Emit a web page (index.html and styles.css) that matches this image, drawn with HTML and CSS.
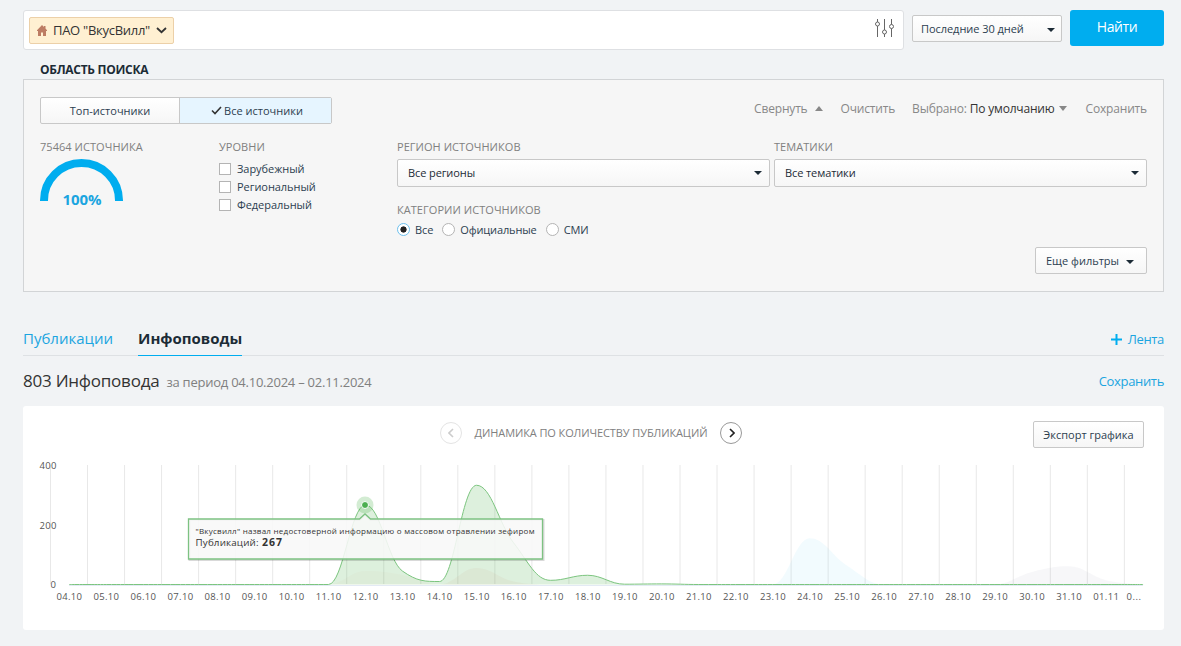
FILE: index.html
```
<!DOCTYPE html>
<html lang="ru">
<head>
	<meta charset="UTF-8">
	<title>Инфоповоды</title>
	<link rel="stylesheet" href="styles.css">
</head>
<body>
	<div class="page">
		<!-- строка поиска -->
		<div class="search">
			<div class="search-field">
				<div class="tag">
					<svg class="home" width="10" height="11" viewBox="0 0 10 11"><path d="M5 0l2 2V1h1.500v2.500L10 5.300V6H9v5H6V7.500H4V11H1V6H0v-.7z"/></svg>
					<span class="tag-text">ПАО "ВкусВилл"</span>
					<svg class="chevron" width="11" height="7" viewBox="0 0 11 7"><path d="M1 1l4.500 4.200L10 1"/></svg>
				</div>
				<svg class="sliders" width="20" height="19" viewBox="0 0 20 19">
					<path d="M2.500 0v3M2.500 7v11M9.500 0v11M9.500 15v3M16.500 0v5.500M16.500 9.500v8.500"/>
					<circle cx="2.500" cy="5" r="2"/>
					<circle cx="9.500" cy="13" r="2"/>
					<circle cx="16.500" cy="7.500" r="2"/>
				</svg>
			</div>
			<div class="btn period"><span>Последние 30 дней</span><i class="caret"></i></div>
			<div class="find"><span>Найти</span></div>
		</div>

		<h3 class="area-title"><span>Область поиска</span></h3>
		<div class="panel">
			<div class="panel-top">
				<div class="switch">
					<div class="switch-item">Топ-источники</div>
					<div class="switch-item active">
						<svg width="11" height="9" viewBox="0 0 11 9"><path d="M1 4.500l3 3L10 1"/></svg>
						<span>Все источники</span>
					</div>
				</div>
				<div class="links">
					<span>Свернуть</span><i class="caret up"></i>
					<span class="l-clear">Очистить</span>
					<span>Выбрано: <b>По умолчанию</b></span><i class="caret gray"></i>
					<span>Сохранить</span>
				</div>
			</div>
			<div class="filters">
				<div class="col-count">
					<div class="label">75464 источника</div>
					<div class="gauge">
						<svg width="83" height="42" viewBox="0 0 83 42"><path d="M4 42V41.500a37.500 37.500 0 0 1 75 0V42"/></svg>
						<span>100%</span>
					</div>
				</div>
				<div class="col-levels">
					<div class="label">Уровни</div>
					<div class="check"><i></i><span>Зарубежный</span></div>
					<div class="check"><i></i><span>Региональный</span></div>
					<div class="check"><i></i><span>Федеральный</span></div>
				</div>
				<div class="col-region">
					<div class="label">Регион источников</div>
					<div class="btn select"><span>Все регионы</span><i class="caret"></i></div>
					<div class="label label-cat">Категории источников</div>
					<div class="radios">
						<i class="radio on"></i><span>Все</span>
						<i class="radio"></i><span>Официальные</span>
						<i class="radio"></i><span>СМИ</span>
					</div>
				</div>
				<div class="col-theme">
					<div class="label">Тематики</div>
					<div class="btn select"><span>Все тематики</span><i class="caret"></i></div>
				</div>
			</div>
			<div class="panel-bottom">
				<div class="btn more"><span>Еще фильтры</span><i class="caret"></i></div>
			</div>
		</div>

		<!-- вкладки -->
		<div class="tabs">
			<div class="tab"><span>Публикации</span></div>
			<div class="tab active"><span>Инфоповоды</span></div>
			<div class="feed">
				<svg width="11" height="11" viewBox="0 0 11 11"><path d="M5.500 0v11M0 5.500h11"/></svg>
				<span>Лента</span>
			</div>
		</div>
		<div class="summary">
			<span class="total">803 Инфоповода</span>
			<span class="dates">за период 04.10.2024 – 02.11.2024</span>
			<span class="save">Сохранить</span>
		</div>

		<!-- график -->
		<div class="card">
			<div class="card-head">
				<div class="card-nav">
					<div class="arrow off"><svg width="7" height="10" viewBox="0 0 7 10"><path d="M5 1L1 5l4 4"/></svg></div>
					<span>Динамика по количеству публикаций</span>
					<div class="arrow"><svg width="7" height="10" viewBox="0 0 7 10"><path d="M2 1l4 4-4 4"/></svg></div>
				</div>
				<div class="btn export"><span>Экспорт графика</span></div>
			</div>
			<svg class="chart" width="1141" height="150" viewBox="0 0 1141 150">
				<g id="grid"></g>
				<g id="areas"></g>
				<path class="axis" d="M46 130.500H1120"/>
				<path id="line" class="line"/>
				<g id="labels"></g>
				<circle class="halo" cx="342" cy="50" r="8.500"/>
				<circle class="dot" cx="342" cy="50" r="3.500"/>
				<path class="tip-shadow" d="M166.500 65h170l5.500-5 5.500 5H520.500v40h-354z"/>
				<path class="tip" d="M165.500 64h171l5.500-5 5.500 5H519.500v40h-354z"/>
				<text class="tip-text small" x="172.500" y="79" textLength="339">"Вкусвилл" назвал недостоверной информацию о массовом отравлении зефиром</text>
				<text class="tip-text" x="172.500" y="91" textLength="63">Публикаций:</text>
				<text class="tip-text bold" x="239" y="91" textLength="20">267</text>
			</svg>
		</div>
	</div>
	<script>
		var left = 46.2, step = 37.03, zero = 129.5, scale = 0.298;
		var n = 30;

		// недостающие дни заполняются нулями
		function points(values){
			var res = [];
			for(var i=0;i<n;i++){
				res[i] = {x: left + step*i, y: zero - (values[i] || 0)*scale};
			}
			return res;
		}
		// сглаженная кривая
		function spline(p){
			var d = 'M' + p[0].x + ' ' + p[0].y;
			var rx = p[0].x, ry = p[0].y;
			for(var i=1;i<p.length;i++){
				var a = p[i-1], b = p[i], c = p[i+1];
				var lx = b.x, ly = b.y, nx = b.x, ny = b.y;
				if(c){
					lx = (1.5*b.x + a.x)/2.5;
					ly = (1.5*b.y + a.y)/2.5;
					nx = (1.5*b.x + c.x)/2.5;
					ny = (1.5*b.y + c.y)/2.5;
					var k = (ny - ly)*(nx - b.x)/(nx - lx) + b.y - ny;
					ly += k;
					ny += k;
					if(ly>a.y && ly>b.y){
						ly = Math.max(a.y, b.y);
						ny = 2*b.y - ly;
					}else if(ly<a.y && ly<b.y){
						ly = Math.min(a.y, b.y);
						ny = 2*b.y - ly;
					}
					if(ny>c.y && ny>b.y){
						ny = Math.max(c.y, b.y);
						ly = 2*b.y - ny;
					}else if(ny<c.y && ny<b.y){
						ny = Math.min(c.y, b.y);
						ly = 2*b.y - ny;
					}
				}
				d += 'C' + [rx, ry, lx, ly, b.x, b.y].join(' ');
				rx = nx;
				ry = ny;
			}
			return d;
		}

		var main = {8:267, 9:45, 10:10, 11:333, 12:140, 13:14, 14:31, 15:1, 16:2};
		var series = [
			{color:'#e8a090', opacity:.05, data:{8:45, 9:32}},
			{color:'#e8a090', opacity:.1, data:{11:55, 12:10}},
			{color:'#5bd0ee', opacity:.08, data:{20:155, 21:64}},
			{color:'#8a8ab0', opacity:.07, data:{26:42, 27:61, 28:14}},
			{color:'#55b555', opacity:.2, data:main}
		];
		var html = '';
		for(var i=0;i<series.length;i++){
			var s = series[i];
			html += '<path d="' + spline(points(s.data)) + 'Z" fill="' + s.color + '" fill-opacity="' + s.opacity + '"/>';
		}
		document.getElementById('areas').innerHTML = html;
		document.getElementById('line').setAttribute('d', spline(points(main)));

		var grid = '', labels = '';
		for(var i=0;i<n;i++){
			var x = left + step*i;
			var day = i<28 ? i+4 : i-27;
			var text = (day<10 ? '0' : '') + day + (i<28 ? '.10' : '.11');
			grid += '<path d="M' + (27.5 + step*i) + ' 10V129"/>';
			if(i<n-1){
				labels += '<text x="' + (x-12.7) + '" y="145" textLength="25.500">' + text + '</text>';
			}
		}
		labels += '<text x="1103.500" y="145" textLength="14.500">0...</text>';
		labels += '<text x="16.500" y="14" textLength="17">400</text>';
		labels += '<text x="16.500" y="74" textLength="17">200</text>';
		labels += '<text x="27.500" y="133">0</text>';
		document.getElementById('grid').innerHTML = grid;
		document.getElementById('labels').innerHTML = labels;
	</script>
</body>
</html>
```
FILE: styles.css
```
*{margin:0;padding:0;box-sizing:border-box;}
body {
	background: #f1f3f5;
	font-family: "Open Sans", sans-serif;
	font-size: 11px;
	color: #2c3e50;
	overflow: hidden;
}
svg {
	display: block;
	flex: none;
}
.page {
	width: 1141px;
	margin: 10px 0 0 23px;
	white-space: nowrap;
}
.btn {
	display: flex;
	align-items: center;
	justify-content: space-between;
	height: 27px;
	border: 1px solid #c8c8c8;
	border-radius: 2px;
	background: linear-gradient(#fff, #f6f6f6);
}
.caret {
	flex: none;
	border: 4px solid transparent;
	border-top: 4px solid #1c2b36;
	border-bottom: 0;
}
.caret.gray {
	border-top: 5px solid #888;
}
.caret.up {
	border-top: 0;
	border-bottom: 5px solid #888;
}

/* поиск */
.search {
	display: flex;
	height: 40px;
}
.search-field {
	display: flex;
	align-items: center;
	justify-content: space-between;
	width: 881px;
	padding: 0 8px 0 5px;
	border: 1px solid #dee0e3;
	border-radius: 3px;
	background: #fff;
}
.tag {
	display: flex;
	align-items: center;
	width: 145px;
	height: 27px;
	padding-left: 7px;
	border: 1px solid #ecd0a8;
	border-radius: 2px;
	background: #fff0d2;
	color: #333;
	font-size: 13px;
}
.home {
	fill: #bd7c63;
	margin-right: 6px;
}
.tag-text {
	width: 103px;
	letter-spacing: -.28px;
}
.chevron {
	fill: none;
	stroke: #333;
	stroke-width: 1.8;
}
.sliders {
	fill: none;
	stroke: #666;
	margin-top: -3px;
}
.period {
	width: 150px;
	margin: 5px 8px 0;
	padding: 0 6px 0 8px;
}
.period span {
	letter-spacing: -.05px;
}
.period .caret {
	margin-top: 2px;
}
.find {
	width: 94px;
	height: 36px;
	border-radius: 3px;
	background: #00adef;
	color: #fff;
	font-size: 14px;
	letter-spacing: -.4px;
	line-height: 34px;
	text-align: center;
}

/* область поиска */
.area-title {
	height: 29px;
	padding: 10px 0 0 17px;
	color: #1c2b36;
	font-size: 12px;
	letter-spacing: -.28px;
	line-height: 20px;
	text-transform: uppercase;
}
.panel {
	height: 213px;
	padding: 17px 16px 0;
	border: 1px solid #d2d4d6;
	background: #f6f6f6;
}
.panel-top {
	display: flex;
	justify-content: space-between;
	height: 28px;
}
.switch {
	display: flex;
	width: 292px;
	height: 27px;
	border: 1px solid #c8c8c8;
	border-radius: 2px;
	background: linear-gradient(#fff, #f6f6f6);
}
.switch-item {
	display: flex;
	align-items: center;
	justify-content: center;
	width: 138px;
}
.switch-item.active {
	width: 152px;
	padding-left: 3px;
	border-left: 1px solid #c8c8c8;
	background: #e6f5ff;
}
.switch-item svg {
	fill: none;
	stroke: #333;
	stroke-width: 1.6;
	margin-right: 2px;
}
.links {
	display: flex;
	align-items: center;
	height: 23px;
	color: #888;
	font-size: 12px;
	letter-spacing: -.18px;
}
.links b {
	color: #333;
	font-weight: normal;
}
.links .up {
	margin: 0 18px 1px 7px;
}
.links .gray {
	margin: 0 19px 1px 4px;
}
.l-clear {
	margin-right: 17px;
}
.filters {
	display: flex;
	height: 122px;
	padding-top: 14px;
}
.label {
	height: 20px;
	color: #808080;
	font-size: 11px;
	letter-spacing: .05px;
	line-height: 16px;
	text-transform: uppercase;
}
.col-count {
	width: 179px;
}
.gauge {
	position: relative;
	width: 83px;
}
.gauge path {
	fill: none;
	stroke: #00adef;
	stroke-width: 8;
}
.gauge span {
	position: absolute;
	left: 0;
	top: 30px;
	width: 84px;
	color: #1ba5e0;
	font-size: 15px;
	font-weight: bold;
	line-height: 20px;
	text-align: center;
}
.col-levels {
	width: 178px;
}
.check {
	display: flex;
	align-items: center;
	height: 18px;
	letter-spacing: -.05px;
}
.check i {
	width: 12px;
	height: 12px;
	margin: 2px 6px 0 0;
	border: 1px solid #b4b4b4;
	background: #fff;
}
.col-region {
	width: 377px;
}
.select {
	width: 373px;
	height: 28px;
	padding: 0 7px 2px 10px;
	color: #1c2b36;
	letter-spacing: -.1px;
}
.select .caret {
	margin-top: 2px;
}
.label-cat {
	margin-top: 15px;
}
.radios {
	display: flex;
	align-items: center;
	height: 14px;
	letter-spacing: -.12px;
}
.radio {
	width: 13px;
	height: 13px;
	margin-right: 5px;
	border: 1px solid #b4b4b4;
	border-radius: 50%;
	background: #fff;
}
.radio.on {
	border-color: #6cc0ee;
	background: radial-gradient(#222 2.800px, #fff 3.400px);
}
.radios span {
	margin-right: 9px;
}
.panel-bottom {
	display: flex;
	justify-content: flex-end;
}
.more {
	width: 112px;
	padding: 0 12px 0 10px;
}
.more .caret {
	margin-top: 2px;
}

/* вкладки */
.tabs {
	display: flex;
	height: 29px;
	margin-top: 35px;
	border-bottom: 1px solid #dee1e4;
}
.tab {
	height: 29px;
	margin-right: 25px;
	color: #1ba5e0;
	font-size: 15px;
	line-height: 23px;
}
.tab.active {
	border-bottom: 1px solid #00adef;
	color: #1c2b36;
	font-weight: bold;
}
.feed {
	display: flex;
	align-items: center;
	height: 24px;
	margin-left: auto;
	color: #1ba5e0;
	font-size: 13px;
	letter-spacing: -.35px;
}
.feed svg {
	stroke: #00adef;
	stroke-width: 2;
	margin-right: 6px;
}
.summary {
	display: flex;
	align-items: baseline;
	height: 50px;
	padding-top: 13px;
}
.total {
	margin-right: 7px;
	color: #333;
	font-size: 17px;
	letter-spacing: -.23px;
}
.dates {
	color: #808080;
	font-size: 13px;
	letter-spacing: -.24px;
}
.save {
	position: relative;
	top: -1px;
	margin-left: auto;
	color: #1ba5e0;
	font-size: 13px;
	letter-spacing: -.33px;
}

/* график */
.card {
	height: 224px;
	border-radius: 3px;
	background: #fff;
}
.card-head {
	display: flex;
	height: 49px;
	padding: 15px 20px 0 417px;
	justify-content: space-between;
}
.card-nav {
	display: flex;
	align-items: center;
	justify-content: space-between;
	width: 302px;
	height: 24px;
	color: #808080;
	letter-spacing: -.1px;
	text-transform: uppercase;
}
.card-nav span {
	margin-top: -1px;
}
.arrow {
	display: flex;
	align-items: center;
	justify-content: center;
	width: 22px;
	height: 22px;
	border: 1px solid #999;
	border-radius: 50%;
}
.arrow path {
	fill: none;
	stroke: #222;
	stroke-width: 1.6;
}
.arrow.off {
	border-color: #e4e4e4;
}
.arrow.off path {
	stroke: #ccc;
}
.export {
	width: 111px;
	justify-content: center;
}
#grid path {
	stroke: #e8e8e8;
}
.axis {
	stroke: #e3eaf4;
}
.line {
	fill: none;
	stroke: #7cc57f;
}
#labels text {
	fill: #555;
	font-size: 9.500px;
}
.halo {
	fill: #5cb85c;
	fill-opacity: .27;
}
.dot {
	fill: #4caf50;
	stroke: #fff;
}
.tip {
	fill: #f8f8f8;
	fill-opacity: .88;
	stroke: #7dc282;
	stroke-width: 1.3;
}
.tip-shadow {
	fill: none;
	stroke: #000;
	stroke-opacity: .15;
	stroke-width: 2;
}
.tip-text {
	fill: #333;
	font-size: 9.800px;
}
.tip-text.small {
	font-size: 8px;
}
.tip-text.bold {
	font-size: 10.500px;
	font-weight: bold;
}
```
